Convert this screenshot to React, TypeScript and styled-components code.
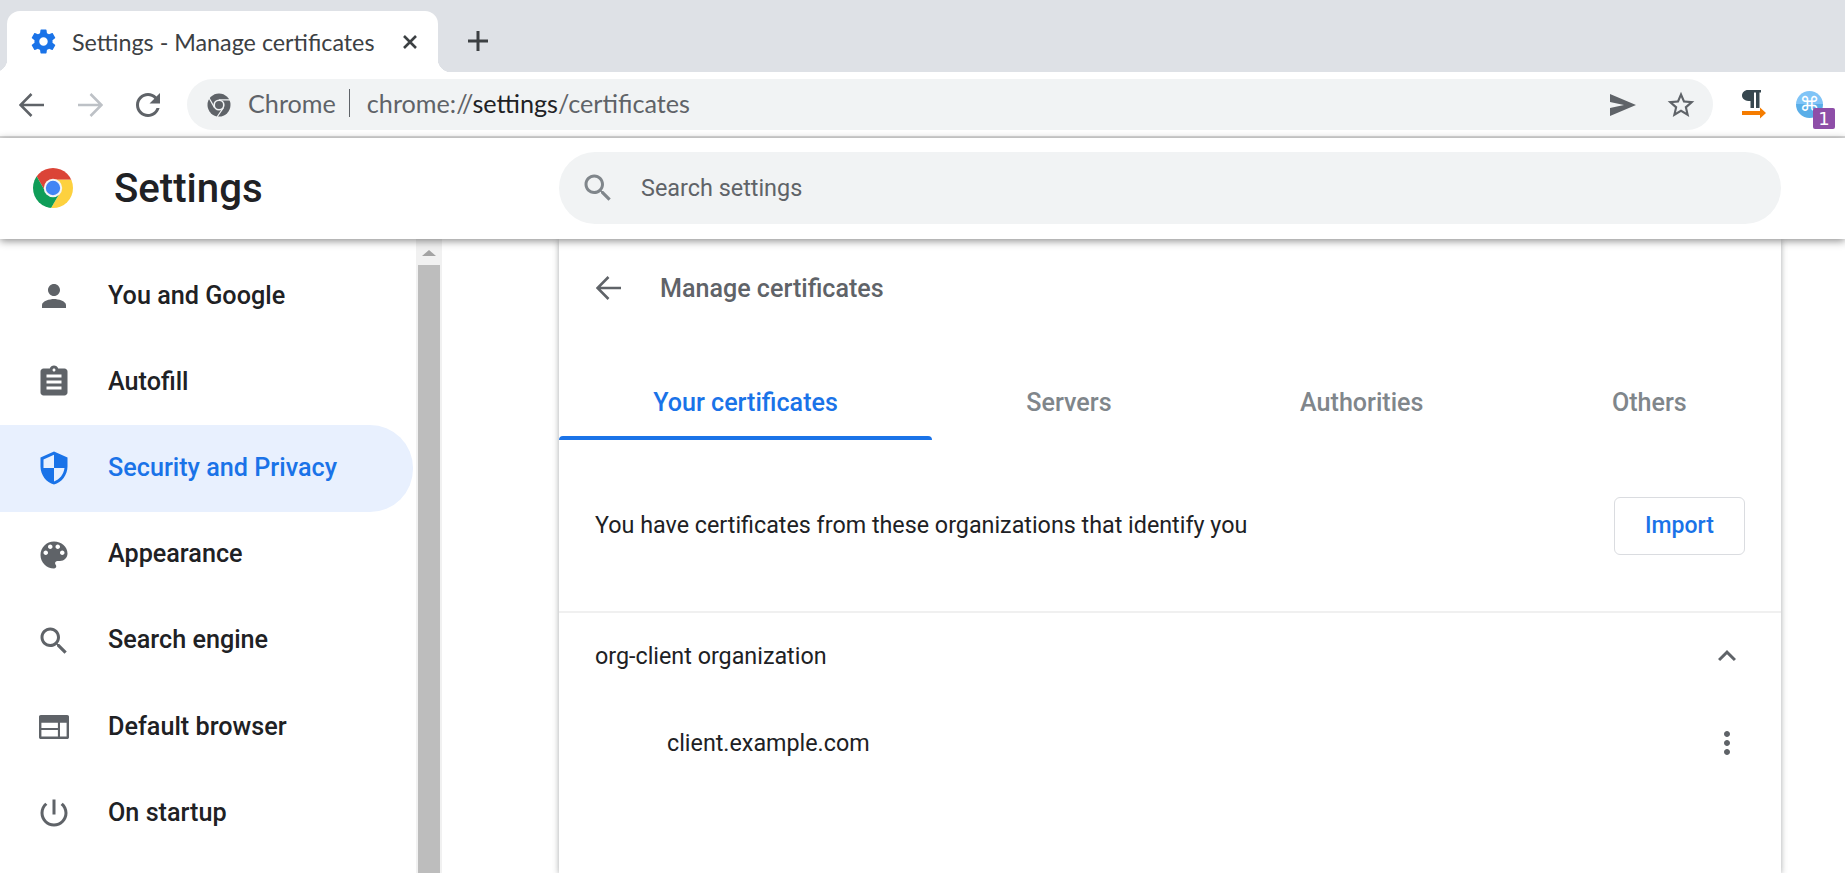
import React from "react";
import styled, { createGlobalStyle } from "styled-components";

const GlobalStyle = createGlobalStyle`
  html, body {
    margin: 0;
    height: 100%;
    background: #fff;
  }
  body {
    font-family: Roboto, "Liberation Sans", sans-serif;
    overflow: hidden;
  }
  * {
    box-sizing: border-box;
  }
`;

const Colors = {
  blue: "#1a73e8",
  grey: "#5f6368",
  text: "#202124",
  omnibox: "#f1f3f4",
  strip: "#dee1e6",
};

const PATHS = {
  gear: "M19.43 12.98c.04-.32.07-.64.07-.98s-.03-.66-.07-.98l2.11-1.65c.19-.15.24-.42.12-.64l-2-3.46c-.12-.22-.39-.3-.61-.22l-2.49 1c-.52-.4-1.08-.73-1.69-.98l-.38-2.65C14.46 2.18 14.25 2 14 2h-4c-.25 0-.46.18-.49.42l-.38 2.65c-.61.25-1.17.59-1.69.98l-2.49-1c-.23-.09-.49 0-.61.22l-2 3.46c-.13.22-.07.49.12.64l2.11 1.65c-.04.32-.07.65-.07.98s.03.66.07.98l-2.11 1.65c-.19.15-.24.42-.12.64l2 3.46c.12.22.39.3.61.22l2.49-1c.52.4 1.08.73 1.69.98l.38 2.65c.03.24.24.42.49.42h4c.25 0 .46-.18.49-.42l.38-2.65c.61-.25 1.17-.59 1.69-.98l2.49 1c.23.09.49 0 .61-.22l2-3.46c.12-.22.07-.49-.12-.64l-2.11-1.65zM12 15.5c-1.93 0-3.5-1.57-3.5-3.5s1.57-3.5 3.5-3.5 3.5 1.57 3.5 3.5-1.57 3.5-3.5 3.5z",
  reload:
    "M17.65 6.35C16.2 4.9 14.21 4 12 4c-4.42 0-7.99 3.58-7.99 8s3.57 8 7.99 8c3.73 0 6.84-2.55 7.73-6h-2.08c-.82 2.33-3.04 4-5.65 4-3.31 0-6-2.69-6-6s2.69-6 6-6c1.66 0 3.14.69 4.22 1.78L13 11h7V4l-2.35 2.35z",
  star: "M22 9.24l-7.19-.62L12 2 9.19 8.63 2 9.24l5.46 4.73L5.82 21 12 17.27 18.18 21l-1.63-7.03L22 9.24zM12 15.4l-3.76 2.27 1-4.28-3.32-2.88 4.38-.38L12 6.1l1.71 4.04 4.38.38-3.32 2.88 1 4.28L12 15.4z",
  person:
    "M12 12c2.21 0 4-1.79 4-4s-1.79-4-4-4-4 1.79-4 4 1.79 4 4 4zm0 2c-2.67 0-8 1.34-8 4v2h16v-2c0-2.66-5.33-4-8-4z",
  assignment:
    "M19 3h-4.18C14.4 1.84 13.3 1 12 1c-1.3 0-2.4.84-2.82 2H5c-1.1 0-2 .9-2 2v14c0 1.1.9 2 2 2h14c1.1 0 2-.9 2-2V5c0-1.1-.9-2-2-2zm-7 0c.55 0 1 .45 1 1s-.45 1-1 1-1-.45-1-1 .45-1 1-1zm5 14H7v-2h10v2zm0-4H7v-2h10v2zm0-4H7V7h10v2z",
  shield:
    "M12 1L3 5v6c0 5.55 3.84 10.74 9 12 5.16-1.26 9-6.45 9-12V5l-9-4zm0 10.99h7c-.53 4.12-3.28 7.79-7 8.94V12H5V6.3l7-3.11v8.8z",
  palette:
    "M12 3c-4.97 0-9 4.03-9 9s4.03 9 9 9c.83 0 1.5-.67 1.5-1.5 0-.39-.15-.74-.39-1.01-.23-.26-.38-.61-.38-.99 0-.83.67-1.5 1.5-1.5H16c2.76 0 5-2.24 5-5 0-4.42-4.03-8-9-8zm-5.5 9c-.83 0-1.5-.67-1.5-1.5S5.67 9 6.5 9 8 9.67 8 10.5 7.33 12 6.5 12zm3-4C8.67 8 8 7.33 8 6.5S8.67 5 9.5 5s1.5.67 1.5 1.5S10.33 8 9.5 8zm5 0c-.83 0-1.5-.67-1.5-1.5S13.67 5 14.5 5s1.5.67 1.5 1.5S15.33 8 14.5 8zm3 4c-.83 0-1.5-.67-1.5-1.5S16.67 9 17.5 9s1.5.67 1.5 1.5-.67 1.5-1.5 1.5z",
  search:
    "M15.5 14h-.79l-.28-.27C15.41 12.59 16 11.11 16 9.5 16 5.91 13.09 3 9.5 3S3 5.91 3 9.5 5.91 16 9.5 16c1.61 0 3.09-.59 4.23-1.57l.27.28v.79l5 4.99L20.49 19l-4.99-5zm-6 0C7.01 14 5 11.99 5 9.5S7.01 5 9.5 5 14 7.01 14 9.5 11.99 14 9.5 14z",
  browser:
    "M3.2 4h17.6c.7 0 1.2.5 1.2 1.2v13.6c0 .7-.5 1.2-1.2 1.2H3.2c-.7 0-1.2-.5-1.2-1.2V5.2C2 4.5 2.5 4 3.2 4zM3.6 9.2v3.4h11V9.2zM3.6 14v4.4h11V14zM16 9.2v9.2h4.4V9.2z",
  power:
    "M13 3h-2v10h2V3zm4.83 2.17l-1.42 1.42C17.99 7.86 19 9.81 19 12c0 3.87-3.13 7-7 7s-7-3.13-7-7c0-2.19 1.01-4.14 2.58-5.42L6.17 5.17C4.23 6.82 3 9.26 3 12c0 4.97 4.03 9 9 9s9-4.03 9-9c0-2.74-1.23-5.18-3.17-6.83z",
  chevron: "M12 8l-6 6 1.41 1.41L12 10.83l4.59 4.58L18 14z",
  dots: "M12 8c1.1 0 2-.9 2-2s-.9-2-2-2-2 .9-2 2 .9 2 2 2zm0 2c-1.1 0-2 .9-2 2s.9 2 2 2 2-.9 2-2-.9-2-2-2zm0 6c-1.1 0-2 .9-2 2s.9 2 2 2 2-.9 2-2-.9-2-2-2z",
};

const Icon = ({ d, size = 36, color = Colors.grey }: { d: string; size?: number; color?: string }) => (
  <svg width={size} height={size} viewBox="0 0 24 24" fill={color} fillRule="evenodd">
    <path d={d} />
  </svg>
);

const Arrow = ({ color, flip }: { color: string; flip?: boolean }) => (
  <svg width="26" height="26" viewBox="0 0 26 26" fill="none" stroke={color} strokeWidth="2.6">
    <path d={flip ? "M1 13h23M13.5 2l11 11-11 11" : "M25 13H2M12.5 2l-11 11 11 11"} />
  </svg>
);

const CloseGlyph = () => (
  <svg width="16" height="16" viewBox="0 0 16 16" stroke="#3c4043" strokeWidth="2.6">
    <path d="M2 2l12 12M14 2L2 14" />
  </svg>
);

const PlusGlyph = () => (
  <svg width="22" height="22" viewBox="0 0 22 22" fill="none" stroke="#3c4043" strokeWidth="3">
    <path d="M11 1v20M1 11h20" />
  </svg>
);

const SendGlyph = () => (
  <svg width="26" height="22" viewBox="0 0 26 22" fill={Colors.grey}>
    <path d="M0 0l26 11L0 22v-8l14-3L0 8z" />
  </svg>
);

const ChromeLogo = ({ id }: { id: string }) => (
  <svg width="40" height="40" viewBox="0 0 24 24">
    <clipPath id={id}>
      <circle cx="12" cy="12" r="12" />
    </clipPath>
    <g clipPath={`url(#${id})`}>
      <polygon fill="#db4437" points="12,7 26,7 26,-3 -2.33,-2.82 7.67,14.5 12,12" />
      <polygon fill="#fdd13f" points="12,7 26,7 26,26.6 9.33,26.6 16.33,14.5 12,12" />
      <polygon fill="#0f9d58" points="16.33,14.5 9.33,26.6 -3,26.6 -2.33,-2.82 7.67,14.5 12,12" />
      <circle cx="12" cy="12" r="5.5" fill="#f5f5f5" />
      <circle cx="12" cy="12" r="4.3" fill="#4285f4" />
    </g>
  </svg>
);

const ChromeGlyph = () => (
  <svg width="24" height="24" viewBox="0 0 24 24">
    <circle cx="12" cy="12" r="11.5" fill={Colors.grey} />
    <path
      d="M12 6.8H24M16.5 14.6L10 24M7.5 14.6L1.5 4"
      stroke={Colors.omnibox}
      strokeWidth="1.2"
      fill="none"
    />
    <circle cx="12" cy="12" r="5.6" fill={Colors.omnibox} />
    <circle cx="12" cy="12" r="4" fill={Colors.grey} />
  </svg>
);

const PilcrowGlyph = () => (
  <svg width="24" height="30" viewBox="0 0 24 30">
    <path fill="#37474f" d="M6 0h13v2.5h-1.5V18H14V2.5h-2V18H8.5V11C3 11 0 9 0 5.5 0 2.5 2.5 0 6 0z" />
    <path fill="#f57c00" d="M0 21h18v-3.5l6 5.5-6 5.5V25H0z" />
  </svg>
);

const Page = styled.div`
  height: 100vh;
  display: flex;
  flex-direction: column;
  overflow: hidden;
`;

const TabStrip = styled.div`
  height: 72px;
  flex: none;
  background: ${Colors.strip};
  display: flex;
  align-items: flex-end;
  padding-left: 7px;
`;

const Tab = styled.div`
  position: relative;
  width: 431px;
  height: 61px;
  background: #fff;
  border-radius: 13px 13px 0 0;
  display: flex;
  align-items: center;
  padding: 0 20px 0 22px;

  &::before,
  &::after {
    content: "";
    position: absolute;
    bottom: 0;
    width: 13px;
    height: 13px;
  }
  &::before {
    left: -13px;
    background: radial-gradient(circle at 0 0, ${Colors.strip} 13px, #fff 13.5px);
  }
  &::after {
    right: -13px;
    background: radial-gradient(circle at 100% 0, ${Colors.strip} 13px, #fff 13.5px);
  }
`;

const TabTitle = styled.span`
  flex: 1;
  margin-left: 14px;
  font-family: Lato, sans-serif;
  font-size: 23.3px;
  color: #3c4043;
  white-space: nowrap;
`;

const NewTab = styled.div`
  margin: 0 0 20px 29px;
  height: 22px;
  display: flex;
`;

const Toolbar = styled.div`
  height: 66px;
  flex: none;
  border-bottom: 2px solid #dcdcdc;
  padding: 7px 0 6px 3px;
  display: flex;
  align-items: center;
`;

const IconSlot = styled.div<{ $width: number }>`
  width: ${(p) => p.$width}px;
  flex: none;
  display: flex;
  align-items: center;
  justify-content: center;
`;

const Omnibox = styled.div`
  width: 1526px;
  height: 51px;
  margin-left: 10px;
  flex: none;
  border-radius: 26px;
  background: ${Colors.omnibox};
  display: flex;
  align-items: center;
  padding: 0 3px 0 20px;
  font-family: Lato, sans-serif;
  font-size: 25.2px;
  color: ${Colors.grey};
`;

const Scheme = styled.span`
  margin: 0 0 3px 17px;
  padding-right: 13px;
  border-right: 1px solid ${Colors.grey};
  line-height: 28px;
`;

const Url = styled.span`
  flex: 1;
  margin: 0 0 3px 17px;
  white-space: nowrap;

  b {
    font-weight: 400;
    color: ${Colors.text};
  }
`;

const Extensions = styled.div`
  display: flex;
  align-items: center;
  margin-left: 29px;
  gap: 30px;
`;

const CommandIcon = styled.div`
  position: relative;
  width: 27px;
  height: 27px;
  border-radius: 50%;
  background: linear-gradient(#80c4f7 50%, #5aaee8 50%);
  color: #fff;
  font-family: "DejaVu Sans", sans-serif;
  font-size: 20px;
  line-height: 27px;
  text-align: center;
`;

const Badge = styled.span`
  position: absolute;
  left: 17px;
  top: 17px;
  width: 22px;
  height: 21px;
  border-radius: 2px;
  background: #8e4ea8;
  color: #fff;
  font-family: "DejaVu Sans", sans-serif;
  font-size: 18px;
  line-height: 21px;
  text-align: center;
`;

const Header = styled.header`
  position: relative;
  z-index: 2;
  height: 101px;
  flex: none;
  background: #fff;
  box-shadow: 0 2px 8px rgba(0, 0, 0, 0.45);
  display: flex;
  align-items: center;
  padding: 0 0 1px 33px;
`;

const Title = styled.h1`
  width: 445px;
  margin: 0 0 0 41px;
  font-size: 40.2px;
  font-weight: 500;
  color: ${Colors.text};
`;

const SearchBox = styled.div`
  width: 1222px;
  height: 72px;
  border-radius: 36px;
  background: ${Colors.omnibox};
  display: flex;
  align-items: center;
  padding-left: 21px;
  color: ${Colors.grey};
  font-size: 23.4px;
  gap: 25px;
`;

const Body = styled.div`
  flex: 1;
  min-height: 0;
  display: flex;
`;

const Sidebar = styled.nav`
  width: 416px;
  flex: none;
  padding-top: 14px;
`;

const NavItem = styled.div<{ $active?: boolean }>`
  width: 413px;
  height: 86.2px;
  display: flex;
  align-items: center;
  gap: 36px;
  padding-left: 36px;
  border-radius: 0 43px 43px 0;
  background: ${(p) => (p.$active ? "#e8f0fe" : "transparent")};
  color: ${(p) => (p.$active ? Colors.blue : Colors.text)};
  font-size: 25.2px;
  font-weight: 500;
`;

const NavLabel = styled.span`
  margin-bottom: 2px;
`;

const ScrollTrack = styled.div`
  width: 26px;
  flex: none;
  display: flex;
  flex-direction: column;
  align-items: center;
  background: #f1f1f1;
`;

const ScrollUp = styled.div`
  height: 0;
  flex: none;
  margin: 11px 0 9px;
  border-left: 7px solid transparent;
  border-right: 7px solid transparent;
  border-bottom: 6px solid #a3a3a3;
`;

const ScrollThumb = styled.div`
  width: 22px;
  flex: 1;
  background: #bdbdbd;
`;

const Main = styled.main`
  flex: 1;
  padding-left: 117px;
`;

const Card = styled.section`
  width: 1222px;
  height: 100%;
  background: #fff;
  box-shadow: 0 1px 6px rgba(60, 64, 67, 0.45);
`;

const SubpageHead = styled.div`
  height: 98px;
  display: flex;
  align-items: center;
  padding-left: 37px;
  color: ${Colors.grey};
  font-size: 25.1px;
  font-weight: 500;
  gap: 38px;
`;

const TabBar = styled.div`
  display: flex;
`;

const CertTab = styled.div<{ $active?: boolean }>`
  position: relative;
  flex: 1 1 auto;
  height: 103px;
  padding-top: 52px;
  line-height: 28px;
  text-align: center;
  font-size: 25.1px;
  font-weight: 500;
  color: ${(p) => (p.$active ? Colors.blue : "#80868b")};

  &::after {
    content: "";
    display: ${(p) => (p.$active ? "block" : "none")};
    position: absolute;
    left: 0;
    right: 0;
    bottom: 0;
    height: 4px;
    border-radius: 4px 4px 0 0;
    background: ${Colors.blue};
  }
`;

const Intro = styled.div`
  height: 173px;
  border-bottom: 2px solid #f0f0f0;
  display: flex;
  align-items: center;
  justify-content: space-between;
  padding: 0 36px;
  font-size: 23.3px;
  color: ${Colors.text};
`;

const IntroText = styled.span`
  margin-bottom: 2px;
`;

const ImportButton = styled.button`
  width: 131px;
  height: 58px;
  border: 1px solid #dadce0;
  border-radius: 6px;
  background: #fff;
  font-family: inherit;
  font-size: 23px;
  font-weight: 500;
  color: ${Colors.blue};
`;

const CertRow = styled.div<{ $height: number; $indent: number }>`
  height: ${(p) => p.$height}px;
  display: flex;
  align-items: center;
  justify-content: space-between;
  padding: 0 36px 0 ${(p) => p.$indent}px;
  font-size: 23.3px;
  color: ${Colors.text};
`;

const navItems = [
  { label: "You and Google", d: PATHS.person },
  { label: "Autofill", d: PATHS.assignment },
  { label: "Security and Privacy", d: PATHS.shield, active: true },
  { label: "Appearance", d: PATHS.palette },
  { label: "Search engine", d: PATHS.search },
  { label: "Default browser", d: PATHS.browser },
  { label: "On startup", d: PATHS.power },
];

const tabs = ["Your certificates", "Servers", "Authorities", "Others"];

const App = () => {
  return (
    <Page>
      <GlobalStyle />
      <TabStrip>
        <Tab>
          <Icon d={PATHS.gear} size={29} color={Colors.blue} />
          <TabTitle>Settings - Manage certificates</TabTitle>
          <CloseGlyph />
        </Tab>
        <NewTab>
          <PlusGlyph />
        </NewTab>
      </TabStrip>
      <Toolbar>
        <IconSlot $width={58}>
          <Arrow color={Colors.grey} />
        </IconSlot>
        <IconSlot $width={58}>
          <Arrow color="#bdc1c6" flip />
        </IconSlot>
        <IconSlot $width={58}>
          <Icon d={PATHS.reload} />
        </IconSlot>
        <Omnibox>
          <ChromeGlyph />
          <Scheme>Chrome</Scheme>
          <Url>
            chrome://<b>settings</b>/certificates
          </Url>
          <IconSlot $width={58}>
            <SendGlyph />
          </IconSlot>
          <IconSlot $width={58}>
            <Icon d={PATHS.star} size={32} />
          </IconSlot>
        </Omnibox>
        <Extensions>
          <PilcrowGlyph />
          <CommandIcon>
            ⌘<Badge>1</Badge>
          </CommandIcon>
        </Extensions>
      </Toolbar>
      <Header>
        <ChromeLogo id="chrome-logo" />
        <Title>Settings</Title>
        <SearchBox>
          <Icon d={PATHS.search} color="#80868b" />
          Search settings
        </SearchBox>
      </Header>
      <Body>
        <Sidebar>
          {navItems.map((item) => (
            <NavItem key={item.label} $active={item.active}>
              <Icon d={item.d} color={item.active ? Colors.blue : Colors.grey} />
              <NavLabel>{item.label}</NavLabel>
            </NavItem>
          ))}
        </Sidebar>
        <ScrollTrack>
          <ScrollUp />
          <ScrollThumb />
        </ScrollTrack>
        <Main>
          <Card>
            <SubpageHead>
              <Arrow color={Colors.grey} />
              Manage certificates
            </SubpageHead>
            <TabBar>
              {tabs.map((tab, i) => (
                <CertTab key={tab} $active={i === 0}>
                  {tab}
                </CertTab>
              ))}
            </TabBar>
            <Intro>
              <IntroText>You have certificates from these organizations that identify you</IntroText>
              <ImportButton>Import</ImportButton>
            </Intro>
            <CertRow $height={85} $indent={36}>
              org-client organization
              <Icon d={PATHS.chevron} />
            </CertRow>
            <CertRow $height={90} $indent={108}>
              client.example.com
              <Icon d={PATHS.dots} />
            </CertRow>
          </Card>
        </Main>
      </Body>
    </Page>
  );
};

export default App;
